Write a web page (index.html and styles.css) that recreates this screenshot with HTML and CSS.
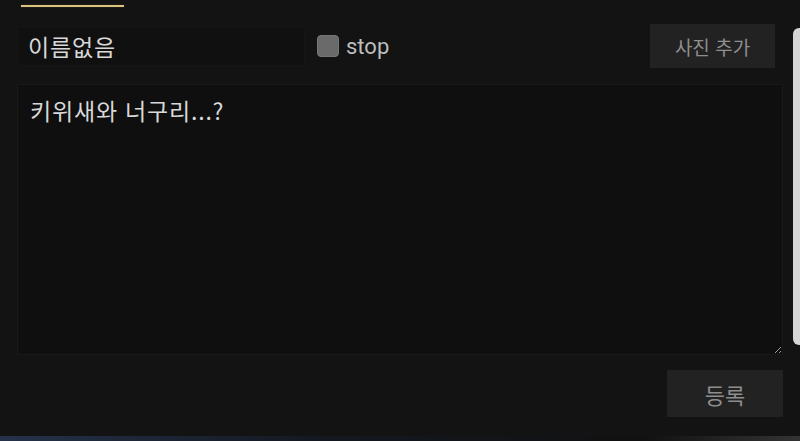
FILE: index.html
```html
<!DOCTYPE html>
<html lang="ko">
<head>
    <meta charset="UTF-8">
    <meta name="viewport" content="width=device-width, initial-scale=1.0">
    <title>글쓰기</title>
    <link rel="stylesheet" href="styles.css">
</head>
<body>
    <div id="wrapper">
        <div class="tab-line"></div>
        <div class="top-row">
            <input class="name" type="text" value="이름없음">
            <label class="stop"><span class="box"></span>stop</label>
            <button class="btn photo">사진 추가</button>
        </div>
        <textarea class="content">키위새와 너구리...?</textarea>
        <div class="bottom-row">
            <button class="btn submit">등록</button>
        </div>
    </div>
    <div class="side-bar"></div>
    <div class="footer-strip"></div>
</body>
</html>
```

FILE: styles.css
```css
* {
    margin: 0;
    padding: 0;
    box-sizing: border-box;
}
html, body {
    height: 100%;
    overflow: hidden;
}
body {
    font-family: "Noto Sans CJK KR", Roboto, sans-serif;
    background-color: #131313;
    color: #dcdcdc;
    position: relative;
}
#wrapper {
    padding: 5px 17px 0 17px;
    display: flex;
    flex-direction: column;
}
.tab-line {
    margin-left: 4px;
    width: 103px;
    height: 2px;
    background-color: #d9c27f;
    box-shadow: 0 0 1px #8a6f2e;
}
.top-row {
    display: flex;
    align-items: center;
    margin-top: 17px;
    height: 44px;
}
.name {
    width: 288px;
    height: 39px;
    background-color: #101010;
    border: 1px solid #151515;
    color: #d8d8d8;
    font-family: "Noto Sans CJK KR", sans-serif;
    font-size: 23px;
    letter-spacing: 0.8px;
    padding: 0 10px;
    outline: none;
}
.stop {
    display: flex;
    align-items: center;
    margin-left: 12px;
    font-family: Roboto, sans-serif;
    font-size: 22px;
    color: #bdbdbd;
}
.box {
    width: 22px;
    height: 22px;
    border-radius: 4px;
    background-color: #6a6a6a;
    border: 1px solid #777;
    margin-right: 7px;
}
.btn {
    background-color: #222222;
    border: none;
    color: #8e8e8e;
    font-family: "Noto Sans CJK KR", sans-serif;
}
.photo {
    margin-left: auto;
    margin-right: 8px;
    width: 125px;
    height: 44px;
    font-size: 19px;
}
.content {
    margin-top: 16px;
    width: 766px;
    height: 271px;
    background-color: #0f0f0f;
    border: 1px solid #191919;
    color: #d8d8d8;
    font-family: "Noto Sans CJK KR", sans-serif;
    font-size: 23px;
    letter-spacing: 0.8px;
    padding: 8px 12px;
    resize: both;
    outline: none;
}
.bottom-row {
    display: flex;
    justify-content: flex-end;
    margin-top: 15px;
    width: 766px;
}
.submit {
    width: 116px;
    height: 47px;
    font-size: 22px;
}
.side-bar {
    position: absolute;
    top: 28px;
    right: 0;
    width: 7px;
    height: 317px;
    background-color: #d6d6d6;
    border-radius: 6px 0 0 6px;
}
.footer-strip {
    position: absolute;
    left: 0;
    right: 0;
    bottom: 0;
    height: 5px;
    background: linear-gradient(to right, #25324a, #141820 40%, #111 80%, #333);
}
```
